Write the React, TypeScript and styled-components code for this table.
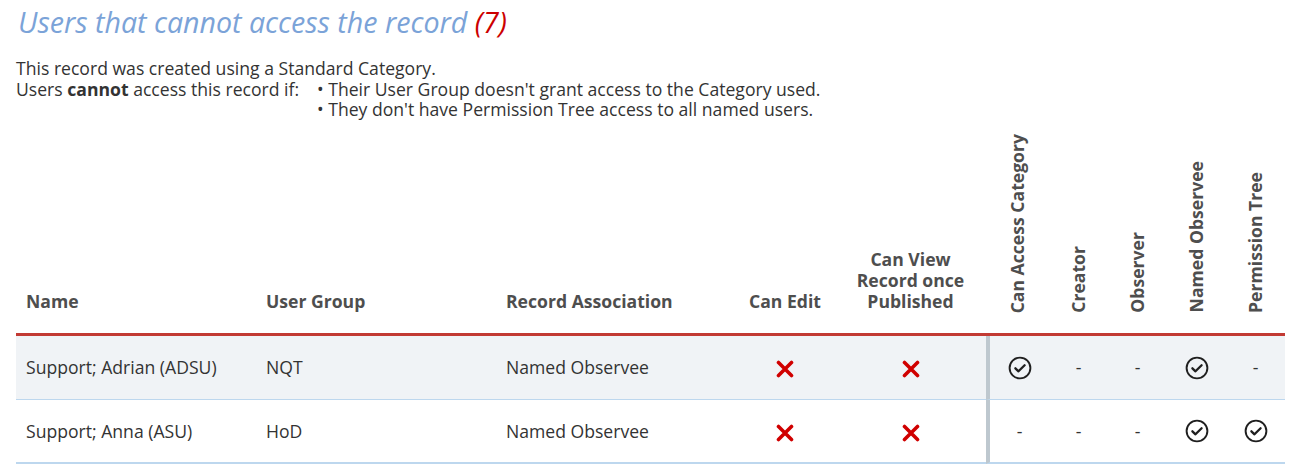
import React from "react";
import styled, { createGlobalStyle } from "styled-components";

const GlobalStyle = createGlobalStyle`
  html, body { margin: 0; padding: 0; background: #ffffff; }
  body { font-family: "Open Sans", "Liberation Sans", sans-serif; color: #333333; }
  * { box-sizing: border-box; }
`;

const Page = styled.div`
  padding: 3px 11px 0 16px;
`;

const Title = styled.h2`
  margin: 0 0 0 2px;
  font-size: 28.6px;
  line-height: 38px;
  font-style: italic;
  font-weight: 400;
  color: #7ba3d8;
`;

const Count = styled.span`
  color: #cc0000;
`;

const Intro = styled.div`
  margin-top: 17px;
  font-size: 17.6px;
  line-height: 20.5px;
  color: #333333;
  display: grid;
  grid-template-columns: 301px 1fr;
`;

const FullLine = styled.div`
  grid-column: 1 / -1;
`;

const Reasons = styled.ul`
  margin: 0;
  padding: 0;
  list-style: none;
`;

const Reason = styled.li`
  &::before { content: "• "; }
`;

const Table = styled.table`
  margin-top: 4px;
  width: 1269px;
  table-layout: fixed;
  border-collapse: separate;
  border-spacing: 0;
  font-size: 17.6px;
`;

const HeadCell = styled.th<{ $align?: "left" | "center"; $vertical?: boolean }>`
  text-align: ${(p) => p.$align ?? "left"};
  vertical-align: bottom;
  padding: 10px 10px ${(p) => (p.$vertical ? "16px" : "21px")};
  font-weight: 700;
  line-height: 21px;
  color: #4e4e4e;
  border-bottom: 3px solid #c23a33;
`;

const VerticalLabel = styled.span`
  display: inline-block;
  writing-mode: vertical-rl;
  transform: rotate(180deg);
  white-space: nowrap;
`;

const Row = styled.tr<{ $striped: boolean; $last?: boolean }>`
  background: ${(p) => (p.$striped ? "#f0f3f6" : "#ffffff")};
  & > td {
    border-bottom: ${(p) => (p.$last ? "2px" : "1px")} solid #bdd7ee;
  }
`;

const Cell = styled.td<{ $align?: "left" | "center"; $divider?: boolean }>`
  height: 64px;
  padding: 0 10px;
  text-align: ${(p) => p.$align ?? "left"};
  vertical-align: middle;
  color: #333333;
  line-height: 20px;
  border-left: ${(p) => (p.$divider ? "4px solid #bec8cf" : "0")};
  white-space: nowrap;
`;

const IconWrap = styled.span`
  display: inline-flex;
  vertical-align: middle;
`;

const Cross = () => (
  <IconWrap>
    <svg width="18" height="18" viewBox="0 0 18 18">
      <path d="M2.5 2.5 L15.5 15.5 M15.5 2.5 L2.5 15.5" stroke="#d00000" strokeWidth="3.6" strokeLinecap="round" fill="none" />
    </svg>
  </IconWrap>
);

const Check = () => (
  <IconWrap>
    <svg width="24" height="24" viewBox="0 0 24 24">
      <circle cx="12" cy="12" r="10.4" stroke="#1f1f1f" strokeWidth="1.9" fill="none" />
      <path d="M7.4 12.3 L10.5 15.3 L16.6 9.2" stroke="#1f1f1f" strokeWidth="2.3" strokeLinecap="round" strokeLinejoin="round" fill="none" />
    </svg>
  </IconWrap>
);

type Flag = boolean;
type User = {
  name: string;
  group: string;
  association: string;
  canEdit: Flag;
  canView: Flag;
  access: [Flag, Flag, Flag, Flag, Flag];
};

const users: User[] = [
  { name: "Support; Adrian (ADSU)", group: "NQT", association: "Named Observee", canEdit: false, canView: false, access: [true, false, false, true, false] },
  { name: "Support; Anna (ASU)", group: "HoD", association: "Named Observee", canEdit: false, canView: false, access: [false, false, false, true, true] },
];

const accessHeaders = ["Can Access Category", "Creator", "Observer", "Named Observee", "Permission Tree"];

export default function App() {
  return (
    <>
      <GlobalStyle />
      <Page>
        <Title>
          Users that cannot access the record <Count>(7)</Count>
        </Title>
        <Intro>
          <FullLine>This record was created using a Standard Category.</FullLine>
          <div>
            Users <b>cannot</b> access this record if:
          </div>
          <Reasons>
            <Reason>Their User Group doesn't grant access to the Category used.</Reason>
            <Reason>They don't have Permission Tree access to all named users.</Reason>
          </Reasons>
        </Intro>
        <Table>
          <colgroup>
            <col style={{ width: 240 }} />
            <col style={{ width: 240 }} />
            <col style={{ width: 239 }} />
            <col style={{ width: 100 }} />
            <col style={{ width: 151 }} />
            <col style={{ width: 63 }} />
            <col style={{ width: 59 }} />
            <col style={{ width: 59 }} />
            <col style={{ width: 59 }} />
            <col style={{ width: 59 }} />
          </colgroup>
          <thead>
            <tr>
              <HeadCell>Name</HeadCell>
              <HeadCell>User Group</HeadCell>
              <HeadCell>Record Association</HeadCell>
              <HeadCell $align="center">Can Edit</HeadCell>
              <HeadCell $align="center">
                Can View
                <br />
                Record once
                <br />
                Published
              </HeadCell>
              {accessHeaders.map((h) => (
                <HeadCell key={h} $align="center" $vertical>
                  <VerticalLabel>{h}</VerticalLabel>
                </HeadCell>
              ))}
            </tr>
          </thead>
          <tbody>
            {users.map((u, i) => (
              <Row key={u.name} $striped={i % 2 === 0} $last={i === users.length - 1}>
                <Cell>{u.name}</Cell>
                <Cell>{u.group}</Cell>
                <Cell>{u.association}</Cell>
                <Cell $align="center">{u.canEdit ? <Check /> : <Cross />}</Cell>
                <Cell $align="center">{u.canView ? <Check /> : <Cross />}</Cell>
                {u.access.map((a, j) => (
                  <Cell key={j} $align="center" $divider={j === 0}>
                    {a ? <Check /> : "-"}
                  </Cell>
                ))}
              </Row>
            ))}
          </tbody>
        </Table>
      </Page>
    </>
  );
}
